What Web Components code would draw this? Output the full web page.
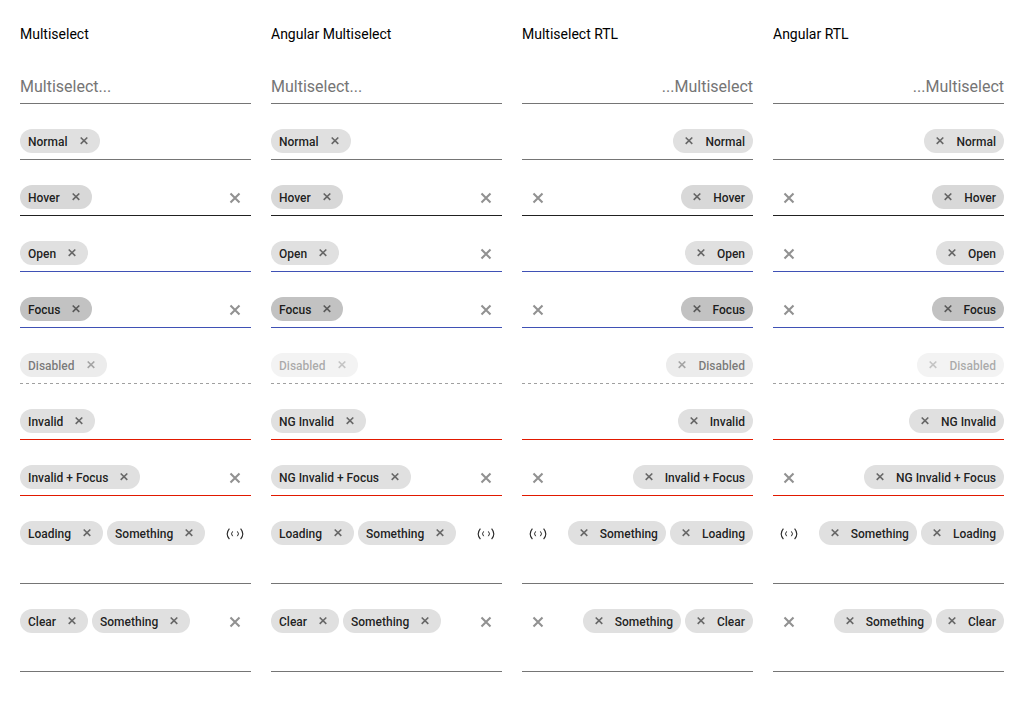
<!DOCTYPE html>
<html lang="en">
<head>
<meta charset="utf-8">
<title>Multiselect states</title>
<style>
body { margin: 0; background: #fff; font-family: Roboto, sans-serif; color: rgba(0,0,0,.87); }
</style>
</head>
<body>
<ms-board></ms-board>
<script>
class MsChip extends HTMLElement {
  constructor() {
    super();
    this.attachShadow({ mode: 'open' }).innerHTML = `
<style>
:host { display: flex; align-items: center; box-sizing: border-box; height: 24px; border-radius: 12px; background: #e0e0e0; padding-inline-start: 8px; font: 500 12px/24px Roboto, sans-serif; color: rgba(0,0,0,.87); white-space: nowrap; flex: none; }
:host([state=hover]) { background: #d8d8d8; }
:host([state=focus]) { background: #c2c2c2; }
.x { width: 32px; height: 24px; display: block; flex: none; }
path { stroke: currentColor; stroke-width: 1.6; fill: none; opacity: .62; }
span { position: relative; top: 1px; }
</style>
<span><slot></slot></span>
<svg class="x" viewBox="0 0 32 24"><path d="M12.7 8.5l6.6 6.4M19.3 8.5l-6.6 6.4"/></svg>`;
  }
}
customElements.define('ms-chip', MsChip);

class MsIcon extends HTMLElement {
  constructor() { super(); this.attachShadow({ mode: 'open' }); }
  connectedCallback() {
    const clear = '<path d="M11.5 7.5l9 9M20.5 7.5l-9 9" stroke="#000" stroke-opacity=".43" stroke-width="2.1"/>';
    const load = '<g stroke="#000" stroke-opacity=".85" stroke-width="1.1"><path d="M10.4 6.6Q6 11.9 10.4 17.2M21.6 6.6Q26 11.9 21.6 17.2"/><path stroke-width="1" d="M13.6 9.4Q11.4 11.8 13.6 14.2M18.4 9.4Q20.6 11.8 18.4 14.2"/></g>';
    this.shadowRoot.innerHTML = `
<style>:host { display: block; width: 32px; height: 24px; flex: none; } svg { display: block; }</style>
<svg width="32" height="24" viewBox="0 0 32 24" fill="none">${this.getAttribute('name') === 'loading' ? load : clear}</svg>`;
  }
}
customElements.define('ms-icon', MsIcon);

class MsField extends HTMLElement {
  constructor() {
    super();
    this.attachShadow({ mode: 'open' }).innerHTML = `
<style>
:host { display: flex; box-sizing: border-box; height: 36px; padding-top: 5px; border-bottom: 1px solid #757575; }
:host([tall]) { height: 68px; }
:host([line=hover]) { border-color: #212121; }
:host([line=active]) { border-color: #3f51b5; }
:host([line=invalid]) { border-color: #e11900; }
:host([line=disabled]) { border-color: transparent; background: repeating-linear-gradient(90deg, #a0a0a0 0 3px, transparent 3px 6px) 0 100% / 100% 1px no-repeat border-box; }
.list { flex: 1; display: flex; gap: 4px; min-width: 0; align-items: flex-start; }
.dim { opacity: .6; }
.dimmer { opacity: .38; }
.hint { font-size: 16px; line-height: 28px; color: #757575; }
.end { padding-top: 1px; }
</style>
<div class="list"><slot></slot></div><div class="end"><slot name="icon"></slot></div>`;
  }
  connectedCallback() {
    const list = this.shadowRoot.querySelector('.list');
    if (this.hasAttribute('hint')) list.classList.add('hint');
    if (this.hasAttribute('dim')) list.classList.add(this.getAttribute('dim'));
  }
}
customElements.define('ms-field', MsField);

class MsColumn extends HTMLElement {
  constructor() {
    super();
    this.attachShadow({ mode: 'open' }).innerHTML = `
<style>
:host { display: block; min-width: 0; }
h2 { margin: 0 0 24px; font: 400 14px/20px Roboto, sans-serif; color: #000; direction: ltr; text-align: left; }
.rows { display: grid; gap: 20px; }
</style>
<h2></h2><div class="rows"><slot></slot></div>`;
  }
  connectedCallback() { this.shadowRoot.querySelector('h2').textContent = this.getAttribute('heading'); }
}
customElements.define('ms-column', MsColumn);

class MsBoard extends HTMLElement {
  constructor() {
    super();
    const column = (heading, ng, rtl) => {
      const clear = '<ms-icon slot="icon" name="clear"></ms-icon>';
      const n = ng ? 'NG ' : '';
      return `<ms-column heading="${heading}" dir="${rtl ? 'rtl' : 'ltr'}">
<ms-field hint>Multiselect...</ms-field>
<ms-field><ms-chip>Normal</ms-chip></ms-field>
<ms-field line="hover"><ms-chip state="hover">Hover</ms-chip>${clear}</ms-field>
<ms-field line="active"><ms-chip>Open</ms-chip>${ng ? clear : ''}</ms-field>
<ms-field line="active"><ms-chip state="focus">Focus</ms-chip>${clear}</ms-field>
<ms-field line="disabled" dim="${ng ? 'dimmer' : 'dim'}"><ms-chip>Disabled</ms-chip></ms-field>
<ms-field line="invalid"><ms-chip>${n}Invalid</ms-chip></ms-field>
<ms-field line="invalid"><ms-chip>${n}Invalid + Focus</ms-chip>${clear}</ms-field>
<ms-field tall><ms-chip>Loading</ms-chip><ms-chip>Something</ms-chip><ms-icon slot="icon" name="loading"></ms-icon></ms-field>
<ms-field tall><ms-chip>Clear</ms-chip><ms-chip>Something</ms-chip>${clear}</ms-field>
</ms-column>`;
    };
    this.attachShadow({ mode: 'open' }).innerHTML = `
<style>:host { display: grid; grid-template-columns: repeat(4, 1fr); gap: 20px; padding: 24px 20px; box-sizing: border-box; }</style>
${column('Multiselect')}${column('Angular Multiselect', true)}${column('Multiselect RTL', false, true)}${column('Angular RTL', true, true)}`;
  }
}
customElements.define('ms-board', MsBoard);
</script>
</body>
</html>
